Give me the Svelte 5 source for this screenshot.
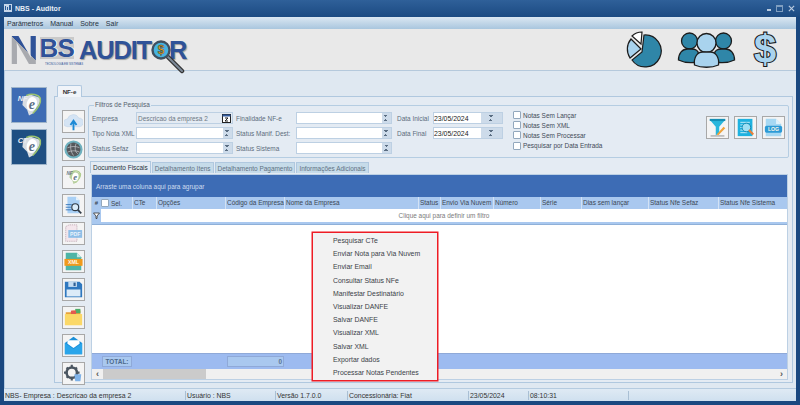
<script>
  const menuLinks = ['Parâmetros', 'Manual', 'Sobre', 'Sair'];
  const innerTabs = ['Documento Fiscais', 'Detalhamento Itens', 'Detalhamento Pagamento', 'Informações Adicionais'];
  const columns = [
    { label: 'CTe', width: 24 },
    { label: 'Opções', width: 69 },
    { label: 'Código da Empresa', width: 59 },
    { label: 'Nome da Empresa', width: 134 },
    { label: 'Status', width: 22 },
    { label: 'Envio Via Nuvem', width: 53 },
    { label: 'Número', width: 47 },
    { label: 'Série', width: 41 },
    { label: 'Dias sem lançar', width: 67 },
    { label: 'Status Nfe Sefaz', width: 70 },
    { label: 'Status Nfe Sistema', width: 69 },
  ];
  const contextItems = [
    'Pesquisar CTe', 'Enviar Nota para Via Nuvem', 'Enviar Email', 'Consultar Status NFe',
    'Manifestar Destinatário', 'Visualizar DANFE', 'Salvar DANFE', 'Visualizar XML',
    'Salvar XML', 'Exportar dados', 'Processar Notas Pendentes',
  ];
  const checks = ['Notas Sem Lançar', 'Notas Sem XML', 'Notas Sem Processar', 'Pesquisar por Data Entrada'];
  const statusCells = [
    { text: 'NBS- Empresa : Descricao da empresa 2', width: 182 },
    { text: 'Usuário : NBS', width: 90 },
    { text: 'Versão 1.7.0.0', width: 72 },
    { text: 'Concessionária: Fiat', width: 121 },
    { text: '23/05/2024', width: 60 },
    { text: '08:10:31', width: 100 },
  ];
</script>

{#snippet fiscalMark(label)}
  <svg viewBox="0 0 36 36" class="mark">
    <path d="M12 10l7-3 10 3c2 3 0 8-3 11l-4 6-4 2-2-6-5-5z" fill="#d9dde2" />
    <path d="M15 8c6-3 13-1 15 3 1 5-3 11-8 16" fill="none" stroke="#9cc36f" stroke-width="1.600" />
    <ellipse cx="21" cy="17" rx="5.500" ry="7.500" transform="rotate(14 21 17)" fill="#fff" />
    <text x="6" y="14" class="mark-label">{label}</text>
    <text x="21" y="22" text-anchor="middle" class="mark-e">e</text>
  </svg>
{/snippet}

<div class="window">
  <div class="titlebar">
    <svg class="app-icon" viewBox="0 0 8 8"><rect width="8" height="8" fill="#c6d6ea" /><path d="M1 6V2h1v4zM3 6V3h1v3zM5 6V1h2v5z" fill="#2b5c99" /></svg>
    <span class="title">NBS - Auditor</span>
    <div class="win-buttons">
      <span class="win-min"></span>
      <span class="win-max"></span>
      <svg viewBox="0 0 8 8" width="7" height="7"><path d="M1 1l6 6M7 1l-6 6" stroke="#b9cbe0" stroke-width="1.400" /></svg>
    </div>
  </div>

  <div class="menubar">
    {#each menuLinks as link}
      <span>{link}</span>
    {/each}
  </div>

  <header class="banner">
    <div class="logo">
      <div class="nbs">
        <span class="nbs-n">N</span>
        <span class="nbs-bs">BS</span>
        <small>TECNOLOGIA EM SISTEMAS</small>
      </div>
      <div class="auditor">
        <span class="audit">AUDIT</span>
        <svg class="lens" viewBox="0 0 34 34" width="34" height="34">
          <path d="M17 17l14 14" stroke="#333" stroke-width="4.500" stroke-linecap="round" />
          <path d="M17 17l14 14" stroke="#7d8a99" stroke-width="2" stroke-linecap="round" />
          <circle cx="10" cy="10" r="8.500" fill="#48b4e0" stroke="#40505f" stroke-width="2.400" />
          <text x="10" y="14" text-anchor="middle" class="lens-sign">$</text>
        </svg>
        <span class="r">R</span>
      </div>
    </div>
    <div class="banner-icons">
      <svg class="pie" viewBox="0 0 36 37" width="36" height="37">
        <path d="M18 4A16 16 0 1 1 6 29L16 21Z" fill="#2f86a8" stroke="#1c1c1c" stroke-width="1.200" />
        <path d="M15 18L5 8A16 16 0 0 0 4 27Z" fill="#a9d3ee" stroke="#1c1c1c" stroke-width="1.200" />
        <path d="M15 13L6 5A14 14 0 0 1 16 1Z" fill="#fff" stroke="#1c1c1c" stroke-width="1.200" />
      </svg>
      <svg viewBox="0 0 58 36" width="59" height="36">
        <g fill="#2f86a8" stroke="#1c1c1c" stroke-width="1.300">
          <circle cx="12" cy="9" r="8" />
          <path d="M1 28c0-7 4-11 9-11h4c4 0 7 2 7 5v8c-6 1-14 1-20-2z" />
          <circle cx="46" cy="9" r="8" />
          <path d="M57 28c0-7-4-11-9-11h-4c-4 0-7 2-7 5v8c6 1 14 1 20-2z" />
        </g>
        <g fill="#a9d3ee" stroke="#1c1c1c" stroke-width="1.300">
          <circle cx="29" cy="11" r="9.500" />
          <path d="M17 33c-1-8 3-13 8-13h8c5 0 9 5 8 13-7 3-17 3-24 0z" />
        </g>
      </svg>
      <span class="dollar">$</span>
    </div>
  </header>

  <div class="main">
    <nav class="modules">
      <button class="module module-nfe">{@render fiscalMark('NF')}</button>
      <button class="module module-cte">{@render fiscalMark('CT')}</button>
    </nav>

    <div class="page">
      <div class="page-tab">NF-e</div>
      <div class="page-body">
        <aside class="toolbar">
          <button class="tool" aria-label="Nuvem">
            <svg viewBox="0 0 22 22"><path d="M4 17a4.500 4.500 0 0 1 0-9 7 7 0 0 1 13-1 5 5 0 0 1 1 10z" fill="#d5e4f4" stroke="#bcd0e6" stroke-width=".6" /><path d="M11 21v-9M7.500 15l3.500-5 3.500 5" stroke="#1d8ad6" stroke-width="2.200" fill="none" /></svg>
          </button>
          <button class="tool" aria-label="Web">
            <svg viewBox="0 0 22 22"><circle cx="11" cy="11" r="10.500" fill="#6fb1bf" /><circle cx="11" cy="11" r="8" fill="#55585c" /><path d="M4 9c5-2 10-2 14 0M4 14c5-2 10-2 14 0M8 4c-1 5 0 10 3 14M14 4c-2 5-1 10 2 12" stroke="#c4c8cc" fill="none" stroke-width=".8" /></svg>
          </button>
          <button class="tool" aria-label="NF-e">{@render fiscalMark('NF')}</button>
          <button class="tool" aria-label="Consultar">
            <svg viewBox="0 0 22 22"><path d="M4 1h10l4 4v15H4z" fill="#a9d0f5" /><path d="M14 1v4h4z" fill="#e6f2fc" /><path d="M2 10h7M2 13h6M2 16h7" stroke="#2a6cb3" /><circle cx="13" cy="13" r="4" fill="#d8ecfb" stroke="#2f3a46" stroke-width="1.300" /><path d="M16 16l4 4" stroke="#2f3a46" stroke-width="2" /></svg>
          </button>
          <button class="tool" aria-label="PDF">
            <svg viewBox="0 0 22 22"><path d="M2 3l4-2h9v19H2z" fill="#f3e6ec" stroke="#b59aa8" stroke-dasharray="1.500 1" stroke-width=".8" /><rect x="5" y="7" width="16" height="9" fill="#8fbfe8" /><text x="13" y="14" text-anchor="middle" class="tool-tag">PDF</text></svg>
          </button>
          <button class="tool" aria-label="XML">
            <svg viewBox="0 0 22 22"><path d="M2 1h13l5 5v15H2z" fill="#4eb5a6" /><path d="M15 1v5h5z" fill="#c0e8e2" /><rect x="0.500" y="8" width="21" height="8" fill="#f09a1c" /><text x="11" y="14.200" text-anchor="middle" class="tool-tag light">XML</text></svg>
          </button>
          <button class="tool" aria-label="Salvar">
            <svg viewBox="0 0 22 22"><path d="M1 2h17l3 3v15H1z" fill="#2f78bf" /><rect x="5" y="2" width="10" height="6" fill="#c4dcf2" /><rect x="11" y="3" width="2.500" height="4" fill="#2f5f94" /><rect x="3" y="11" width="16" height="8" fill="#dcebf8" /></svg>
          </button>
          <button class="tool" aria-label="Pasta">
            <svg viewBox="0 0 22 22"><path d="M2 5h6l2-2h9v6H2z" fill="#e8a33a" /><rect x="13" y="1" width="6" height="5" fill="#4fae6a" /><rect x="8" y="3" width="6" height="4" fill="#e35a4f" /><path d="M1 7h20v13H1z" fill="#fbd867" /></svg>
          </button>
          <button class="tool" aria-label="Email">
            <svg viewBox="0 0 22 22"><path d="M1 8l10-7 10 7v13H1z" fill="#1b8fd8" /><path d="M4 9V5h14v4l-7 5z" fill="#fff" /><path d="M1 8l10 7 10-7v13H1z" fill="#2aa5ea" /></svg>
          </button>
          <button class="tool" aria-label="Processar">
            <svg viewBox="0 0 22 22"><circle cx="9" cy="10" r="6" fill="none" stroke="#4a5560" stroke-width="3" /><path d="M9 1v3M9 16v3M0 10h3M15 10h3M3 4l2 2M13 14l2 2M15 4l-2 2M3 16l2-2" stroke="#4a5560" stroke-width="2.500" /><path d="M12 12h8l-1 8h-6z" fill="#7fb2e8" /></svg>
          </button>
        </aside>

        <div class="content">
          <fieldset class="filters">
            <legend>Filtros de Pesquisa</legend>
            <div class="filter-grid">
              <label for="empresa">Empresa</label>
              <div class="field empresa" id="empresa">
                <span>Descricao da empresa 2</span>
                <svg viewBox="0 0 9 9" width="9" height="9"><rect x=".5" y=".5" width="8" height="8" fill="#fff" stroke="#222" /><rect x=".5" y=".5" width="8" height="2" fill="#335b9d" /><path d="M3 4h3L3 7h3" stroke="#222" fill="none" /></svg>
              </div>
              <label class="mid" for="finalidade">Finalidade NF-e</label>
              <div class="field" id="finalidade"><i class="spin"></i></div>
              <label class="far" for="inicial">Data Inicial</label>
              <div class="field date" id="inicial"><span>23/05/2024</span><i class="spin wide"></i></div>

              <label for="tipo">Tipo Nota XML</label>
              <div class="field" id="tipo"><i class="spin"></i></div>
              <label class="mid" for="manif">Status Manif. Dest:</label>
              <div class="field" id="manif"><i class="spin"></i></div>
              <label class="far" for="final">Data Final</label>
              <div class="field date" id="final"><span>23/05/2024</span><i class="spin wide"></i></div>

              <label for="sefaz">Status Sefaz</label>
              <div class="field" id="sefaz"><i class="spin"></i></div>
              <label class="mid" for="sistema">Status Sistema</label>
              <div class="field" id="sistema"><i class="spin"></i></div>
            </div>

            <div class="checks">
              {#each checks as check}
                <div class="check"><i class="box"></i>{check}</div>
              {/each}
            </div>

            <div class="actions">
              <button class="tool" aria-label="Filtro">
                <svg viewBox="0 0 22 22"><path d="M2 2h18l-7 8v8l-4 2V10z" fill="#29b6dc" /><rect x="2" y="1" width="18" height="2.500" fill="#148fb6" /><path d="M10 19l8-9 2 2-8 8z" fill="#f0a33a" /><rect x="3" y="20" width="16" height="1.500" fill="#aaa" /></svg>
              </button>
              <button class="tool" aria-label="Relatório">
                <svg viewBox="0 0 22 22"><rect x="2" y="1" width="17" height="20" fill="#1fb2e0" /><path d="M5 5h11M5 8h5M5 11h5M5 14h5M5 17h8" stroke="#d9f3fb" /><circle cx="12" cy="11" r="5" fill="#9fe0f4" stroke="#0b7fa8" /><path d="M15 14l5 5" stroke="#e8803a" stroke-width="2.500" /></svg>
              </button>
              <button class="tool" aria-label="Log">
                <svg viewBox="0 0 22 22"><path d="M2 1h12l6 6v14H2z" fill="#a6d8f3" /><path d="M14 1v6h6z" fill="#dff2fc" /><rect x="1" y="9" width="20" height="8" rx="2" fill="#2c9ad6" /><text x="11" y="15.200" text-anchor="middle" class="tool-tag light">LOG</text></svg>
              </button>
            </div>
          </fieldset>

          <div class="inner-tabs">
            {#each innerTabs as tab, i}
              <span class="inner-tab" class:active={i === 0}>{tab}</span>
            {/each}
          </div>

          <div class="grid">
            <div class="group-panel">Arraste uma coluna aqui para agrupar</div>
            <div class="col-header">
              <span class="col-ind">#</span>
              <span class="col-sel"><i class="box"></i>Sel.</span>
              {#each columns as col}
                <span class="col" style="width: {col.width}px">{col.label}</span>
              {/each}
            </div>
            <div class="filter-row">
              <span class="filter-ind">
                <svg viewBox="0 0 7 7" width="7" height="7"><path d="M.5 1h6L4 4v2.500H3V4z" fill="#fff" stroke="#333" stroke-width=".8" /></svg>
              </span>
              <span class="filter-hint">Clique aqui para definir um filtro</span>
            </div>
            <div class="grid-body"></div>
            <div class="footer">
              <span class="total">TOTAL:</span>
              <span class="sum">0</span>
            </div>
            <div class="scroll">
              <span class="arrow">‹</span>
              <span class="thumb"></span>
              <span class="arrow end">›</span>
            </div>
          </div>

          <div class="context">
            {#each contextItems as item}
              <div>{item}</div>
            {/each}
          </div>
        </div>
      </div>
    </div>
  </div>

  <footer class="statusbar">
    {#each statusCells as cell}
      <span style="width: {cell.width}px">{cell.text}</span>
    {/each}
  </footer>
</div>

<style>
  :global(body) {
    margin: 0;
    background: #1b4a82;
  }

  .window {
    width: 800px;
    height: 405px;
    display: flex;
    flex-direction: column;
    overflow: hidden;
    box-sizing: border-box;
    padding: 0 4px 4px;
    background: #1a4880;
    font-family: "Liberation Sans", Arial, sans-serif;
    font-size: 6.450px;
    color: #47525e;
  }

  button {
    padding: 0;
    font: inherit;
  }

  svg {
    display: block;
  }

  .titlebar {
    height: 17px;
    flex: none;
    display: flex;
    align-items: center;
    margin: 0 -4px;
    padding: 0 4px 1px;
    box-sizing: border-box;
    background: linear-gradient(#2f6099, #1b4a82);
  }

  .app-icon {
    width: 8px;
    height: 8px;
    margin-right: 3px;
  }

  .title {
    color: #e8eef6;
    font-weight: bold;
    font-size: 7px;
  }

  .win-buttons {
    margin-left: auto;
    display: flex;
    align-items: center;
    gap: 5px;
    padding-right: 1px;
  }

  .win-min {
    width: 4px;
    height: 2px;
    margin-top: 4px;
    background: #b9cbe0;
  }

  .win-max {
    width: 5px;
    height: 4px;
    border: 1px solid #7f9ec0;
    border-top-width: 2px;
  }

  .menubar {
    height: 12px;
    flex: none;
    display: flex;
    align-items: center;
    gap: 7px;
    padding-left: 3px;
    background: linear-gradient(#dbe7f2, #a9c6de);
    color: #27323e;
    font-size: 7px;
  }

  .banner {
    height: 42px;
    flex: none;
    display: flex;
    justify-content: space-between;
    align-items: center;
    background: #e9e9e9;
    border-bottom: 1px solid #b5c9dc;
    box-sizing: border-box;
  }

  .logo {
    display: flex;
    align-items: center;
    margin-left: 5px;
  }

  .nbs {
    position: relative;
    height: 30px;
    width: 66px;
    display: flex;
    align-items: center;
    gap: 1px;
    font-weight: bold;
    line-height: 30px;
    white-space: nowrap;
  }

  .nbs-n {
    font-size: 41px;
    background: linear-gradient(45deg, #a8aaaf 52%, #2f5298 53%);
    -webkit-background-clip: text;
    background-clip: text;
    -webkit-text-fill-color: transparent;
  }

  .nbs-bs {
    height: 22px;
    line-height: 22px;
    width: 34px;
    margin-top: -3px;
    color: #2f5298;
    background: #c9c9c9;
    font-size: 26px;
    letter-spacing: -1px;
    text-shadow: 1px 0 0 #fff;
  }

  .nbs small {
    position: absolute;
    left: 36px;
    bottom: -1px;
    font-size: 2.800px;
    line-height: 3px;
    font-weight: normal;
    color: #2f5298;
  }

  .auditor {
    display: flex;
    align-items: center;
    color: #2f5298;
    font-weight: bold;
    font-size: 25.500px;
    line-height: 28px;
    margin-left: 4px;
    text-shadow: 1px 1px 1px #9a9a9a;
  }

  .audit {
    letter-spacing: -1.200px;
  }

  .lens {
    margin: 7px -14px -7px 0;
    position: relative;
    flex: none;
  }

  .lens-sign {
    font-size: 12px;
    font-weight: bold;
    fill: #e5a21d;
    stroke: #333;
    stroke-width: .4px;
    text-shadow: none;
  }

  .r {
    margin-left: -2px;
  }

  .banner-icons {
    display: flex;
    align-items: center;
    gap: 17px;
    padding-right: 19px;
  }

  .pie {
    margin-right: -2px;
  }

  .dollar {
    width: 24px;
    height: 41px;
    line-height: 41px;
    text-align: center;
    font-size: 40px;
    font-weight: bold;
    color: #a9d3ee;
    -webkit-text-stroke: 2.200px #1c1c1c;
    paint-order: stroke fill;
  }

  .main {
    flex: 1;
    min-height: 0;
    display: flex;
    background: #dfe8f1;
    padding: 13px 3px 5px 6px;
    gap: 7px;
    border-left: 1px solid #b5cbe0;
  }

  .modules {
    width: 36px;
    flex: none;
    display: flex;
    flex-direction: column;
    gap: 6px;
    padding-top: 3px;
  }

  .module {
    width: 36px;
    height: 36px;
    box-sizing: border-box;
    border: 1px solid #9fb5ca;
  }

  .module-nfe {
    background: #3e6cb4;
  }

  .module-cte {
    background: #1f4f82;
  }

  .mark {
    width: 100%;
    height: 100%;
  }

  .mark-label {
    font-size: 8px;
    font-weight: bold;
    font-style: italic;
    fill: #e6ebf2;
  }

  .mark-e {
    font-family: "Liberation Serif", serif;
    font-size: 15px;
    font-weight: bold;
    font-style: italic;
    fill: #5c6f86;
  }

  .tool .mark path:first-child {
    fill: #b9cfa0;
  }

  .tool .mark-label {
    fill: #6d7884;
  }

  .page {
    flex: 1;
    min-width: 0;
    display: flex;
    flex-direction: column;
    padding-left: 3px;
  }

  .page-tab {
    width: 25px;
    height: 12px;
    box-sizing: border-box;
    border: 1px solid #b0c8df;
    border-bottom: none;
    border-radius: 2px 2px 0 0;
    background: #f0f4f9;
    color: #333;
    text-align: center;
    line-height: 11px;
    font-weight: bold;
    font-size: 6.200px;
    position: relative;
    top: 1px;
  }

  .page-body {
    flex: 1;
    min-height: 0;
    display: flex;
    gap: 3px;
    border: 1px solid #b0c8df;
    margin-left: -3px;
    padding: 0 3px 2px 7px;
    box-sizing: border-box;
    background: #e4ebf3;
  }

  .toolbar {
    width: 23px;
    flex: none;
    display: flex;
    flex-direction: column;
    gap: 5px;
    padding-top: 13px;
  }

  .tool {
    width: 23px;
    height: 23px;
    box-sizing: border-box;
    border: 1px solid #a8a8a8;
    background: #f4f4f4;
    flex: none;
    display: flex;
    align-items: center;
    justify-content: center;
  }

  .tool > svg {
    width: 19px;
    height: 19px;
  }

  .tool > svg.mark {
    width: 21px;
    height: 21px;
  }

  .tool-tag {
    font-size: 6px;
    font-weight: bold;
    fill: #eaf3fb;
  }

  .tool-tag.light {
    fill: #fff8e8;
  }

  .content {
    flex: 1;
    min-width: 0;
    display: flex;
    flex-direction: column;
    position: relative;
  }

  .filters {
    height: 57px;
    flex: none;
    box-sizing: border-box;
    margin: 4px 0 3px;
    padding: 0 3px;
    border: 1px solid #b5cde2;
    border-radius: 2px;
    display: flex;
    align-items: flex-start;
    min-width: 0;
  }

  .filters legend {
    padding: 0 1px;
    margin-left: 2px;
    line-height: 8px;
    color: #55616e;
  }

  .filter-grid {
    display: grid;
    grid-template-columns: 44px 97px 63px 96px 41px 70px;
    grid-auto-rows: 12px;
    row-gap: 3px;
    align-items: center;
    margin-top: 3px;
    flex: none;
  }

  label {
    white-space: nowrap;
    color: #5b6b7c;
  }

  label.mid {
    padding-left: 3px;
  }

  label.far {
    padding-left: 5px;
  }

  .field {
    height: 12px;
    box-sizing: border-box;
    display: flex;
    align-items: center;
    justify-content: space-between;
    background: #fff;
    border: 1px solid #bdd0e3;
    overflow: hidden;
  }

  .empresa {
    background: #e4ebf3;
    color: #6d7884;
    padding: 0 1px;
  }

  .date {
    color: #222;
    font-size: 6.900px;
  }

  .spin {
    display: block;
    margin-left: auto;
    width: 9px;
    height: 100%;
    background:
      linear-gradient(45deg, transparent 50%, #5a6d82 50%) no-repeat 2px 2px / 2px 2px,
      linear-gradient(-45deg, transparent 50%, #5a6d82 50%) no-repeat 4px 2px / 2px 2px,
      linear-gradient(135deg, transparent 50%, #5a6d82 50%) no-repeat 2px 6px / 2px 2px,
      linear-gradient(-135deg, transparent 50%, #5a6d82 50%) no-repeat 4px 6px / 2px 2px,
      #cddbea;
  }

  .spin.wide {
    width: 21px;
    background-position: 8px 2px, 10px 2px, 8px 6px, 10px 6px, 0 0;
  }

  .checks {
    display: flex;
    flex-direction: column;
    gap: 2px;
    margin: 2px 0 0 10px;
    white-space: nowrap;
  }

  .check {
    display: flex;
    align-items: center;
    height: 8.200px;
    gap: 2px;
    color: #3f4a56;
  }

  .box {
    display: block;
    width: 8px;
    height: 8px;
    box-sizing: border-box;
    background: #fff;
    border: 1px solid #93a8bd;
    border-radius: 1px;
    flex: none;
  }

  .actions {
    margin-left: auto;
    display: flex;
    gap: 5px;
    margin-top: 7px;
  }

  .inner-tabs {
    height: 12px;
    flex: none;
    display: flex;
    gap: 1px;
    margin-left: 2px;
    align-items: flex-end;
  }

  .inner-tab {
    height: 11px;
    line-height: 11px;
    padding: 0 2px;
    box-sizing: border-box;
    background: #c6dbe9;
    color: #5e7182;
    border: 1px solid #b0c8df;
    border-bottom: none;
    white-space: nowrap;
  }

  .inner-tab.active {
    height: 12px;
    background: #e4ebf3;
    color: #26313c;
  }

  .grid {
    flex: 1;
    min-height: 0;
    display: flex;
    flex-direction: column;
    border: 1px solid #bcd0e4;
    background: #fff;
    margin: 1px 1px 0 3px;
  }

  .group-panel {
    height: 22px;
    flex: none;
    display: flex;
    align-items: center;
    padding-left: 4px;
    background: #3d6cb5;
    color: #cfdcf0;
  }

  .col-header {
    height: 12px;
    flex: none;
    display: flex;
    align-items: center;
    background: #a9c8ef;
    color: #3a4653;
    white-space: nowrap;
  }

  .col-ind {
    width: 9px;
    text-align: center;
    font-size: 6px;
    font-weight: bold;
    flex: none;
  }

  .col-sel {
    width: 31px;
    display: flex;
    gap: 2px;
    align-items: center;
    flex: none;
    box-sizing: border-box;
  }

  .col {
    flex: none;
    box-sizing: border-box;
    padding-left: 1px;
    overflow: hidden;
    height: 12px;
    line-height: 12px;
    border-left: 1px solid #d2e2f5;
  }

  .filter-row {
    height: 15px;
    flex: none;
    display: flex;
    background: #fff;
    border-bottom: 2px solid #a9c8ef;
    box-sizing: border-box;
  }

  .filter-ind {
    width: 9px;
    flex: none;
    background: #a9c8ef;
    display: flex;
    align-items: center;
    justify-content: center;
  }

  .filter-hint {
    flex: 1;
    text-align: center;
    line-height: 13px;
    color: #7b7b7b;
  }

  .grid-body {
    flex: 1;
    background: #fff;
    border-top: 1px solid #8fb0d8;
    border-bottom: 1px solid #8fa9d8;
  }

  .footer {
    height: 15px;
    flex: none;
    display: flex;
    align-items: center;
    background: #9dbbf0;
    padding-left: 10px;
    box-sizing: border-box;
  }

  .total {
    width: 30px;
    height: 11px;
    line-height: 10px;
    box-sizing: border-box;
    background: #a9c8ef;
    border: 1px solid #8fa9d8;
    font-weight: bold;
    color: #4d6a8c;
    text-align: center;
  }

  .sum {
    margin-left: 95px;
    width: 57px;
    height: 11px;
    line-height: 10px;
    box-sizing: border-box;
    background: #a9c8ef;
    border: 1px solid #8fa9d8;
    text-align: right;
    padding-right: 1px;
    font-weight: bold;
    color: #5a7391;
  }

  .scroll {
    height: 10px;
    flex: none;
    display: flex;
    align-items: center;
    background: #f0f0f0;
  }

  .arrow {
    width: 11px;
    text-align: center;
    font-size: 9px;
    line-height: 9px;
    font-weight: bold;
    color: #555;
    flex: none;
  }

  .arrow.end {
    margin-left: auto;
  }

  .thumb {
    width: 103px;
    height: 10px;
    background: #cbcbcb;
    flex: none;
  }

  .context {
    position: absolute;
    left: 224px;
    top: 135px;
    width: 126px;
    height: 149px;
    box-sizing: border-box;
    padding: 1px 0 0 20px;
    background: #f2f2f2;
    border: 1px solid #ee1c25;
    box-shadow: 0 0 0 .5px #ee1c25;
    color: #3b3f48;
    font-size: 6.900px;
  }

  .context div {
    height: 13.200px;
    line-height: 13.200px;
    white-space: nowrap;
  }

  .statusbar {
    height: 13px;
    flex: none;
    display: flex;
    align-items: center;
    box-sizing: border-box;
    background: linear-gradient(#dfeaf4, #cfe0ef);
    border-top: 1px solid #b5cbe0;
    color: #333;
    font-size: 6.900px;
  }

  .statusbar span {
    flex: none;
    box-sizing: border-box;
    padding-left: 1px;
    border-right: 1px solid #a9bfd4;
    white-space: nowrap;
    line-height: 9px;
  }
</style>
